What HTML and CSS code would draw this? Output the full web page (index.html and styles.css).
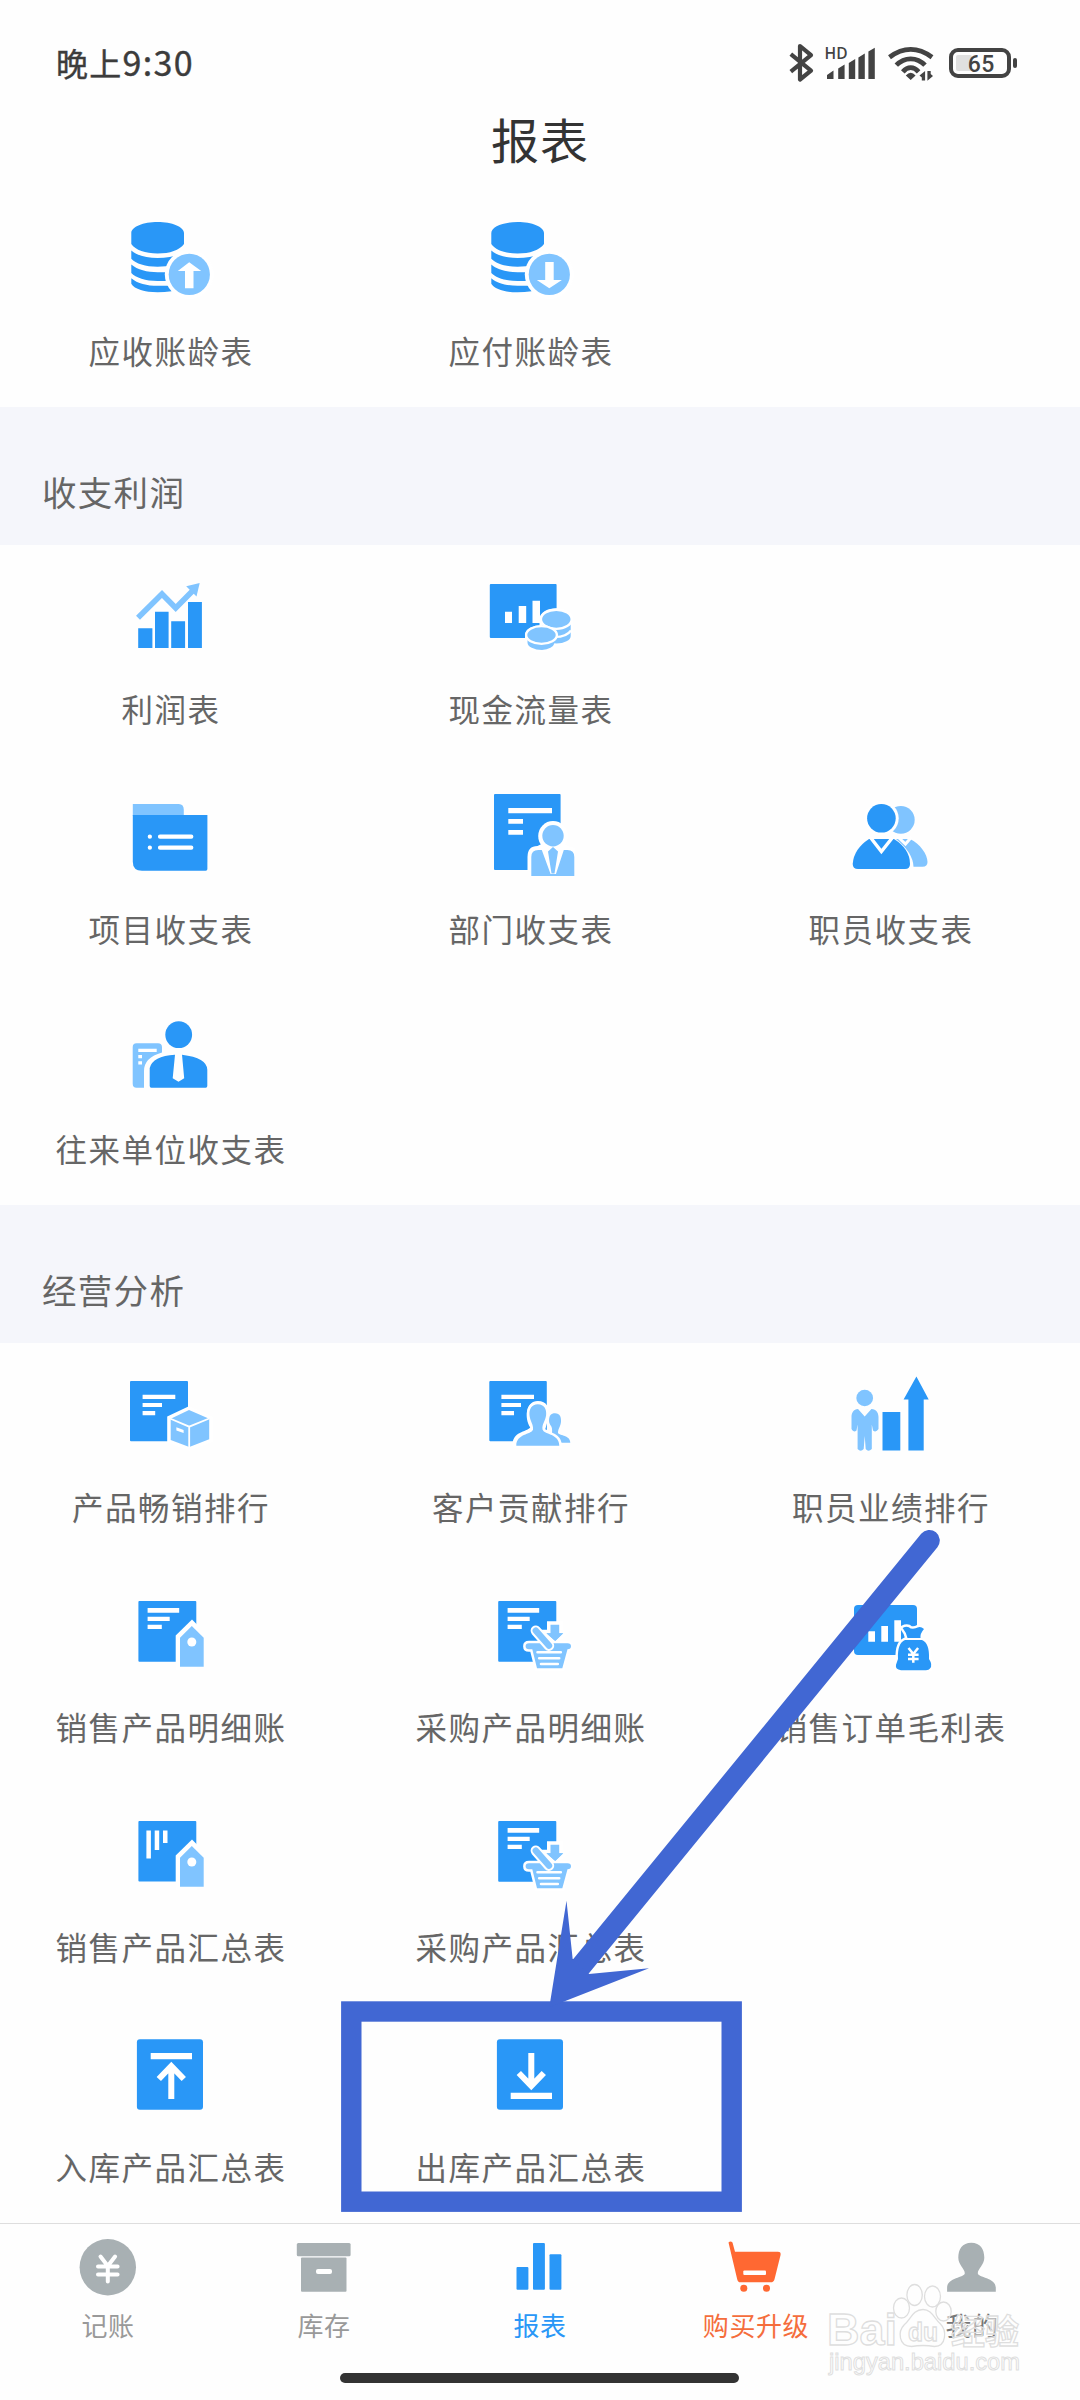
FILE: index.html
```html
<!DOCTYPE html>
<html lang="zh-CN">
<head>
<meta charset="utf-8">
<title>报表</title>
<link rel="stylesheet" href="styles.css">
</head>
<body>
<div class="screen">
  <div class="status">
    <span class="clock">晚上<span class="digits">9:30</span></span>
    <svg class="status-icons" viewBox="785 34 240 60" width="240" height="60">
      <path class="ink-line" stroke-width="4.200" d="M790.8 54.2 811 70.6 800 79.5V46L811 55.2 790.8 71.6"/>
      <text class="hd" x="824.6" y="58.600">HD</text>
      <path class="ink" d="M827 75l6.5-4.6V79H827zM838.2 68.5l6.4-4V79h-6.4zM848.8 63l6.4-4V79h-6.4zM858.4 57.5l6.400-4V79h-6.4zM868.4 51.6l6.4-3.8V79h-6.4z"/>
      <path class="ink-line" stroke-width="4.8" d="M889.5 57.2Q900 49.400 910.7 49.4T932 57.2M896.3 65.2Q902.5 58.8 910.7 58.8T925 65.2M902.8 71.8Q906.5 67.6 910.7 67.6T918.6 71.8"/>
      <path class="ink" d="M905.8 75.5q4.9-5.5 9.8 0L910.7 80zM919.5 75.5l5.6-4.5v9.5h-3.3v-3zM933 76l-5.6 4.8V71h3.3v3z"/>
      <rect class="ink-line" stroke-width="4" x="951" y="50" width="58" height="26" rx="7"/>
      <rect class="ink" x="1013" y="58" width="4" height="10" rx="2"/>
      <rect x="956" y="55" width="16" height="16" rx="2" fill="#e0e0e0"/>
      <text class="pct" x="981.3" y="71.7">65</text>
    </svg>
  </div>
  <h1 class="title">报表</h1>

  <div class="grid">
    <div class="cell">
      <svg viewBox="110 207 120 100">
        <g id="stack">
          <path class="b" d="M131.3 233c0-6.200 12-11 26.300-11s26.400 4.800 26.400 11v11c-4.500 6.200-14 9.500-26.400 9.500s-22-3.400-26.300-9.500zM131.300 250.500c6 5.300 16 7.500 26.300 7.500s20-2 26.400-6v12H157.600c-12 0-22-2.500-26.300-7zM157.600 266.700c-12 0-22-3.200-26.300-8v-8.200c6 5.300 16 7.500 26.300 7.500h12v8zM131.300 264.500c6 5.300 16 7.700 26.300 7.700h14v8.200q-8 .5-14 .5c-12 0-22-3.300-26.300-8zM131.300 278.200c6 5.300 16 7.600 26.300 7.600h14v5.500q-7 1-14 1c-13 0-23-3-26.300-8.500z"/>
          <circle cx="189.300" cy="274.400" r="24.500" fill="#fff"/>
          <circle class="l" cx="189.300" cy="274.400" r="20.600"/>
        </g>
        <path class="w" d="M189.200 262.300l12 8.700h-7.700v17.300H185V271h-7.200z"/>
      </svg>
      <span>应收账龄表</span>
    </div>
    <div class="cell">
      <svg viewBox="470 207 120 100">
        <use href="#stack" x="360"/>
        <path class="w" d="M549.300 288.300l-12.500-8.300h8.400v-18h8.500v18h8.200z"/>
      </svg>
      <span>应付账龄表</span>
    </div>
  </div>

  <h2 class="band">收支利润</h2>
  <div class="grid">
    <div class="cell">
      <svg viewBox="110 565 120 100">
        <path class="ll" stroke-width="5.600" d="M138 617.800 162 594l13.700 14 18-18.300"/>
        <path class="l" d="M199.700 583l-13.500 3.300 10.300 10.200z"/>
        <path class="b" d="M138.200 628.300h14.200V648h-14.200zM155 611.700h13.600V648H155zM171.200 621.300h13.900V648h-13.900zM188 602h13.900v46H188z"/>
      </svg>
      <span>利润表</span>
    </div>
    <div class="cell">
      <svg viewBox="470 565 120 100">
        <rect class="b" x="489.800" y="584" width="66.800" height="54" rx="1"/>
        <path class="w" d="M505 611.700h7V623h-7zM518.700 606h7.500v17h-7.500zM532.500 600.700h7.500V623h-7.500z"/>
        <path class="l wo2" d="M542 619.300a14.300 8.500 0 0 1 28.700 0V636a14.300 7.500 0 0 1-14.300 7.500l-2-.2a14 7.500 0 0 1-12.400 6.700 14.500 7.500 0 0 1-14.500-7.500v-7a14.300 8 0 0 1 14.500-8z"/>
        <ellipse class="l coin" cx="556.300" cy="619.300" rx="15.400" ry="9.600"/>
        <path class="wl" stroke-width="2.200" d="M555 637q11.500 0 16-6.500"/>
        <ellipse class="l coin" cx="541.500" cy="635" rx="15.400" ry="8.900"/>
      </svg>
      <span>现金流量表</span>
    </div>
    <div class="cell"></div>

    <div class="cell">
      <svg viewBox="110 785 120 100">
        <path class="l" d="M132.800 804h46q5 0 5 6v6h-51z"/>
        <path class="b" d="M132.800 815h74.600v54q0 1.700-1.700 1.700H142q-9.200 0-9.200-9z"/>
        <path class="wl round" stroke-width="4.200" d="M149.800 836.700h.1M149.800 847.700h.1M160 836.700h31.300M160 847.700h31.300"/>
      </svg>
      <span>项目收支表</span>
    </div>
    <div class="cell">
      <svg viewBox="470 785 120 100">
        <rect class="b" x="494" y="794" width="66.600" height="76" rx="1"/>
        <path class="w" d="M508.300 808H552v5.300h-43.700zM508.300 819H523v4.800h-14.700zM508.300 830H523v4.800h-14.700z"/>
        <g fill="#fff"><ellipse cx="553" cy="836" rx="14.800" ry="15"/><path d="M527.500 871v-14q0-11 10-11l6-3h18l6 3 7 2v23z"/></g>
        <circle class="l" cx="553" cy="835.800" r="10.700"/>
        <path class="l" d="M531.300 876v-19q0-7 7-7h3.500l9.500 26zM574.300 876v-19q0-7-7-7h-3.500l-8.500 26zM553 847l5 4.500-3.500 22h-3l-3.500-22z"/>
        <path class="l" d="M549 874h8v2h-8z"/>
      </svg>
      <span>部门收支表</span>
    </div>
    <div class="cell">
      <svg viewBox="830 785 120 100">
        <circle class="l" cx="900.800" cy="819.800" r="13.900"/>
        <circle class="w" cx="881.400" cy="818.300" r="17.300"/>
        <circle class="b" cx="881.400" cy="818.300" r="14.300"/>
        <path class="l" d="M896 839h14c10 5 17.500 15 17.500 23q0 4.700-5 4.700h-9q-.5-14-17.500-27.700z"/>
        <path class="wl" stroke-width="3" d="M898 837l7.500 7 6-7"/>
        <path class="b" d="M869 839h25q16 10 16 25 0 5-5 5h-47q-5.300 0-5.300-5 1-15 16.300-25z"/>
        <path class="wl" stroke-width="3.400" d="M870.500 837.500 881.400 851.500 892.500 837.500"/>
      </svg>
      <span>职员收支表</span>
    </div>

    <div class="cell">
      <svg viewBox="110 1005 120 100">
        <path class="l" d="M136.500 1043.300H158q4 0 4 4v5.200q-18 5-18 18.500v16.700h-7.500q-3.800 0-3.800-4v-36.400q0-4 3.800-4z"/>
        <path class="w" d="M138.300 1048.700h18.400v3.400h-18.400zM138.300 1055h3.700v3.200h-3.700zM138.300 1061.300h3.700v3.200h-3.700z"/>
        <circle class="b" cx="178.700" cy="1034.700" r="13.400"/>
        <path class="b" d="M175 1054.700l-2.300 23.600 5.800 3.400 5.700-3.400-2.200-23.600q25 3 25.300 15v16.300q0 1.700-1.600 1.700h-54.400q-1.600 0-1.600-1.700V1068q3-12 25.300-13.300z"/>
      </svg>
      <span>往来单位收支表</span>
    </div>
  </div>

  <h2 class="band">经营分析</h2>
  <div class="grid">
    <div class="cell">
      <svg viewBox="110 1363 120 100">
        <rect class="b" x="130" y="1381" width="58" height="60.300" rx="1"/>
        <path class="w" d="M142.600 1394.700h32.700v4.300h-32.700zM142.600 1403H162v4h-19.400zM142.600 1411h12.600v4.300h-12.600z"/>
        <path class="l wo" d="M189 1410l20.200 8.700v20.600L189.300 1447l-18.600-7v-21.300z"/>
        <path class="wl" stroke-width="1.800" d="M170 1418.500l19.200 8.200 20-8.200M189.200 1426.700V1447"/>
        <path class="w" d="M176.400 1427.300l7.200 2.600v3.200l-7.200-2.600z"/>
      </svg>
      <span>产品畅销排行</span>
    </div>
    <div class="cell">
      <svg viewBox="470 1363 120 100">
        <rect class="b" x="489.300" y="1381" width="57.500" height="60.300" rx="1"/>
        <path class="w" d="M501.400 1394.700H534v4.300h-32.600zM501.400 1403H521v4h-19.600zM501.400 1411H514v4.300h-12.600z"/>
        <path class="w" d="M537.800 1401c9 0 12 7 11.500 14l-9 31.500h-28c0-16 14-14 18-19-6-9-5-26.500 7.500-26.500z"/>
        <path class="l" d="M555 1413.300c5 0 6.300 4 6 8.500s-3 7-3 11.200c2 3 12.300 2 12.300 9.700H557l-5-10c1-8-3-7-3-12 0-5 2-7.400 6-7.400z"/>
        <path class="l wo2" d="M537.800 1404.300c6.500 0 9 5 8.300 11s-4.500 9-3.500 14.500c2 5 16.700 4 16.700 15.900h-43c0-11.900 14.700-10.900 16.700-15.900.600-5.500-3-8.500-3.500-14.500-.5-6 2-11 8.300-11z"/>
      </svg>
      <span>客户贡献排行</span>
    </div>
    <div class="cell">
      <svg viewBox="830 1363 120 100">
        <ellipse class="l" cx="864.700" cy="1398" rx="8.400" ry="8.200"/>
        <path class="l" d="M858 1409l6.700 7.500 6.700-7.500c5 0 7 4 7.100 8v12q-2.500 4-5.500 1.500l-1.200-6V1449q-3.500 3.500-6.100 0l-1-13-1 13q-3 3.500-6.100 0v-24.500l-1.100 6q-3 2.500-5-1.500v-12c0-4 2-8 6.500-8z"/>
        <path class="b" d="M882.500 1412h17.800v38.500h-17.800zM908.400 1450.500v-51h-4.800l12.800-23 12.300 23h-5v51z"/>
      </svg>
      <span>职员业绩排行</span>
    </div>

    <div class="cell">
      <svg viewBox="110 1583 120 100">
        <rect class="b" x="138.400" y="1601" width="57.900" height="60.700" rx="1"/>
        <path class="w" d="M147.600 1608h31.600v4.700h-31.600zM147.600 1616.700h22.100v4.300h-22.100zM147.600 1624.700h14.200v4.300h-14.200z"/>
        <g id="tag">
          <path class="w" d="M175.700 1670v-34.500l16.300-16 5 5V1670z"/>
          <path class="l" d="M191.800 1626l11.900 11.700v29H180v-29z"/>
          <circle class="w" cx="191.800" cy="1642" r="4.500"/>
        </g>
      </svg>
      <span>销售产品明细账</span>
    </div>
    <div class="cell">
      <svg viewBox="470 1583 120 100">
        <g id="purchase">
          <rect class="b" x="498.200" y="1601" width="58.100" height="60.700" rx="1"/>
          <path class="w" d="M507.600 1608h31.600v4.700h-31.600zM507.600 1616.700h22.100v4.300h-22.100zM507.600 1624.700h14.200v4.300h-14.200z"/>
          <path class="l wo" d="M550.500 1624.700h8.700v8.600h4L555.200 1641l-8.700-7.700h4z"/>
          <path class="l wo2" d="M529 1643.300h38.500q3.500 0 3.500 3t-3.500 3l-5.200 19H537l-4.700-19H529q-3.400 0-3.400-3t3.400-3z"/>
          <path class="wl round" stroke-width="10.400" d="M535.800 1630.700l13.200 15"/>
          <path class="ll round" stroke-width="6.400" d="M535.800 1630.700l13.200 15"/>
          <path class="l" d="M546.500 1633.300l8.700 7.700 8-7.700z"/>
          <path class="wl round" stroke-width="2.600" d="M537.500 1652.200h23.300M539.200 1658.200h20M541 1664h16.800"/>
        </g>
      </svg>
      <span>采购产品明细账</span>
    </div>
    <div class="cell">
      <svg viewBox="830 1583 120 100">
        <rect class="b" x="854" y="1605" width="63" height="50" rx="4"/>
        <path class="w" d="M868.300 1631.300h6.700v10.400h-6.700zM881.300 1626h6.700v15.700h-6.700zM894.300 1620.300h6.700v21.400h-6.700z"/>
        <path class="b wo2" d="M902.600 1628q5-2.500 8 .5 5 .5 7-1 3-1.500 6.400 1.500-4 4.500-3.500 9h-13q-1.500-6-4.900-10zM905 1640h17c5 2 7.500 8 7 19q4 6 1 9.500-1 1.700-4 1.700h-25q-6-1-5-5.500l2-5.700c-.5-11 2-17 7-19z"/>
        <path class="wl" stroke-width="2.500" d="M908.500 1648l4.800 6 4.800-6M913.300 1653.500v9.200M908 1654.800h10.600M908 1659h10.600"/>
      </svg>
      <span>销售订单毛利表</span>
    </div>

    <div class="cell">
      <svg viewBox="110 1803 120 100">
        <rect class="b" x="138.400" y="1821" width="57.900" height="60.500" rx="1"/>
        <path class="w" d="M146.400 1830.500h4.500v28h-4.500zM154.700 1830.500h4.500v19.500h-4.500zM163 1830.500h4.500V1843H163z"/>
        <use href="#tag" y="220"/>
      </svg>
      <span>销售产品汇总表</span>
    </div>
    <div class="cell">
      <svg viewBox="470 1803 120 100"><use href="#purchase" y="220"/></svg>
      <span>采购产品汇总表</span>
    </div>
    <div class="cell"></div>

    <div class="cell">
      <svg viewBox="110 2023 120 100">
        <rect class="b" x="136.900" y="2039.300" width="66.100" height="70.400" rx="3"/>
        <path class="w" d="M150.700 2053H192v6.300h-41.300z"/>
        <path class="wl" stroke-width="6" d="M171.300 2099v-33M158.800 2079l12.500-13 12.500 13"/>
      </svg>
      <span>入库产品汇总表</span>
    </div>
    <div class="cell">
      <svg viewBox="470 2023 120 100">
        <rect class="b" x="496.900" y="2039.300" width="66.100" height="70.400" rx="3"/>
        <path class="w" d="M510.700 2092.700H552v6.300h-41.300z"/>
        <path class="wl" stroke-width="6" d="M531.300 2053v33M518.800 2073l12.500 13 12.500-13"/>
      </svg>
      <span>出库产品汇总表</span>
    </div>
  </div>

  <nav class="tabs">
    <div class="tab">
      <svg viewBox="68 2237 80 60">
        <circle cx="107.800" cy="2267.300" r="28.200"/>
        <path class="wl round" stroke-width="4" d="M100.500 2256.500l7.300 9.500 7.300-9.500M107.800 2266v15.500M98 2266.500h19.600M98 2274.500h19.600"/>
      </svg>
      <span>记账</span>
    </div>
    <div class="tab">
      <svg viewBox="284 2237 80 60">
        <rect x="296.800" y="2243" width="53.800" height="13.300" rx="1.500"/>
        <rect x="301" y="2257.500" width="45.500" height="34.300" rx="1"/>
        <rect class="w" x="316" y="2269" width="16" height="5" rx="2"/>
      </svg>
      <span>库存</span>
    </div>
    <div class="tab active">
      <svg viewBox="500 2237 80 60">
        <rect x="516.500" y="2267" width="11.900" height="22.700" rx="1"/>
        <rect x="533" y="2243" width="11.900" height="46.700" rx="1"/>
        <rect x="549.500" y="2254.300" width="11.900" height="35.400" rx="1"/>
      </svg>
      <span>报表</span>
    </div>
    <div class="tab upgrade">
      <svg viewBox="716 2237 80 60">
        <path d="M728.500 2242.500q2-2 4 0l2.500 9.200h43q3.200 0 2.500 3.500l-6 24q-.6 3.100-4 3.100h-30q-2.800 0-3.300-3.100z"/>
        <rect class="w" x="743.300" y="2270.500" width="22.700" height="4.600" rx="1"/>
        <circle cx="743.800" cy="2288.300" r="3.500"/><circle cx="766.500" cy="2288.300" r="3.500"/>
      </svg>
      <span>购买升级</span>
    </div>
    <div class="tab">
      <svg viewBox="932 2237 80 60">
        <path d="M971.300 2242.700c9 0 13 6.500 13 15 0 7-6.500 11-6.500 15.500 0 4.500 18 4 18 14.500v4h-48.700v-4c0-10.500 17.700-10 17.700-14.500s-6.500-8.500-6.500-15.500c0-8.500 4-15 13-15z"/>
      </svg>
      <span class="mine">我的</span>
    </div>
  </nav>
  <div class="home"></div>

  <svg class="marks" viewBox="0 0 1080 2400" width="1080" height="2400">
    <rect x="351.300" y="2011.500" width="380.400" height="190.200" fill="none" stroke="#4167d3" stroke-width="20.400"/>
    <path d="M929.300 1540.500 580 1967.500" stroke="#4167d3" stroke-width="21" stroke-linecap="round"/>
    <path d="M566.500 1900.700l6.200 58.600L589 1974l60-5.700-99.700 39z" fill="#4167d3"/>
    <g class="stamp">
      <text x="827" y="2345" font-size="45" textLength="70" lengthAdjust="spacingAndGlyphs">Bai</text>
      <text class="cjk" x="951" y="2344" font-size="34">经验</text>
      <ellipse cx="901.500" cy="2308" rx="8" ry="10"/>
      <ellipse cx="914.600" cy="2295" rx="7.700" ry="10.500"/>
      <ellipse cx="932.500" cy="2296.500" rx="8" ry="10.500"/>
      <ellipse cx="943.500" cy="2311.500" rx="7.700" ry="9.500"/>
      <path d="M923 2309.500c9 0 11 9 17.500 14.500 6 6 6.500 22-6 22.500q-11.500-2-23 0c-13 0-14-15-7-22 6-5 8.500-15 18.500-15z"/>
      <text x="923" y="2340.500" font-size="26" text-anchor="middle" textLength="30" lengthAdjust="spacingAndGlyphs">du</text>
      <text class="url" x="829" y="2370" font-size="24" textLength="191" lengthAdjust="spacingAndGlyphs">jingyan.baidu.com</text>
    </g>
  </svg>
</div>
</body>
</html>
```
FILE: styles.css
```css
* { box-sizing: border-box; }
body {
  margin: 0;
  background: #fff;
  font-family: "Noto Sans CJK SC", "Noto Sans", sans-serif;
}
.screen {
  position: relative;
  width: 1080px;
  height: 2400px;
  overflow: hidden;
  background: #fefefe;
}
.status {
  display: flex;
  justify-content: space-between;
  height: 94px;
  padding: 34px 55px 0 56px;
}
.clock {
  font-size: 32px;
  font-weight: 400;
  line-height: 56px;
  letter-spacing: 1.2px;
  color: #3c3c3c;
  -webkit-text-stroke: .4px #3c3c3c;
}
.digits { font-size: 34px; letter-spacing: 1.4px; }
.status-icons { display: block; }
.ink { fill: #434343; }
.ink-line { fill: none; stroke: #434343; stroke-linejoin: round; }
.hd { font: 600 15.5px "Open Sans", sans-serif; fill: #434343; }
.pct { font: 500 23px Roboto, sans-serif; fill: #434343; text-anchor: middle; letter-spacing: .5px; }
.title {
  height: 93px;
  margin: 0;
  font-size: 48px;
  font-weight: 400;
  line-height: 88px;
  letter-spacing: 1px;
  text-align: center;
  color: #333;
}
.grid {
  display: grid;
  grid-template-columns: repeat(3, 360px);
  grid-auto-rows: 220px;
  margin-left: -10px;
}
.cell {
  display: flex;
  flex-direction: column;
  align-items: center;
  gap: 22px;
  padding-top: 20px;
}
.cell svg { width: 120px; height: 100px; flex: none; }
.cell span {
  padding-left: 2px;
  font-size: 31.5px;
  line-height: 43px;
  letter-spacing: 1.5px;
  white-space: nowrap;
  color: #666;
}
.b { fill: #2997f7; }
.l { fill: #80c4ff; }
.w { fill: #fff; }
.ll { fill: none; stroke: #80c4ff; }
.wl { fill: none; stroke: #fff; }
.round { stroke-linecap: round; }
.wo { stroke: #fff; stroke-width: 7px; paint-order: stroke; }
.wo2 { stroke: #fff; stroke-width: 5px; paint-order: stroke; }
.coin { stroke: #fff; stroke-width: 2.4px; }
.band {
  height: 138px;
  margin: 0;
  padding: 60px 0 0 42px;
  background: #f5f6fb;
  font-size: 34.5px;
  font-weight: 400;
  line-height: 49px;
  letter-spacing: 1.3px;
  color: #666;
}
.tabs {
  display: grid;
  grid-template-columns: repeat(5, 216px);
  height: 150px;
  border-top: 1px solid #dedede;
  color: #999;
  fill: #a8b0b3;
}
.tab {
  display: flex;
  flex-direction: column;
  align-items: center;
  gap: 11px;
  padding-top: 13px;
}
.tab svg { width: 80px; height: 60px; }
.tab span { font-size: 26px; line-height: 34px; letter-spacing: .6px; }
.tab .mine { color: #777; }
.active { color: #2997f7; fill: #2997f7; }
.upgrade { color: #f56d3c; fill: #ff6832; }
.home {
  width: 399px;
  height: 10px;
  margin-left: 340px;
  border-radius: 5px;
  background: #333;
}
.marks { position: absolute; top: 0; left: 0; }
.stamp {
  fill: rgba(255, 255, 255, .45);
  stroke: #dedede;
  stroke-width: 1.3px;
  font-family: "Liberation Sans", sans-serif;
  font-weight: 700;
}
.stamp .cjk { font-family: "Noto Sans CJK SC", sans-serif; }
.stamp .url { font-weight: 400; stroke-width: 1px; }
```
